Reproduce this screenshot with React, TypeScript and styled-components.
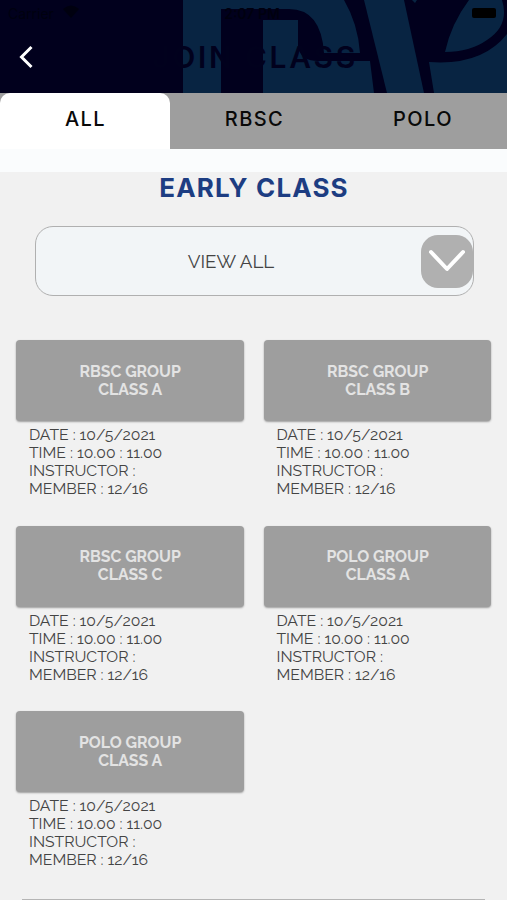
import React from "react";
import styled, { createGlobalStyle } from "styled-components";

const GlobalStyle = createGlobalStyle`
  * { box-sizing: border-box; }
  body { margin: 0; background: #f1f1f1; }
`;

const Screen = styled.main`
  width: 507px;
  height: 900px;
  overflow: hidden;
  background: #f1f1f1;
  font-family: Raleway, Lato, sans-serif;
  color: #444;
`;

const Header = styled.header`
  position: relative;
  height: 93px;
  background: #01001d;
  overflow: hidden;
`;

const Emblem = styled.svg`
  position: absolute;
  inset: 0;
`;

const StatusBar = styled.div`
  position: relative;
  display: flex;
  justify-content: space-between;
  height: 28px;
  padding: 5px 11px 0 8px;
  font: 14px/18px Inter, sans-serif;
  color: #00000f;
`;

const Carrier = styled.div`
  display: flex;
  gap: 8px;
  width: 120px;
`;

const Clock = styled.span`
  font-weight: 600;
`;

const BatterySlot = styled.div`
  display: flex;
  justify-content: flex-end;
  width: 120px;
  padding-top: 3px;
`;

const Battery = styled.span`
  width: 24px;
  height: 10px;
  border-radius: 2px;
  background: #000;
`;

const TitleBar = styled.div`
  position: relative;
  display: grid;
  grid-template-columns: 52px 1fr 52px;
  align-items: center;
  height: 58px;
`;

const BackButton = styled.button`
  display: flex;
  justify-content: center;
  padding: 0;
  border: 0;
  background: none;
`;

const Title = styled.h1`
  margin: 0;
  padding: 0 0 1px 3px;
  text-align: center;
  white-space: nowrap;
  font: 600 30px/34px Inter, sans-serif;
  letter-spacing: 2.7px;
  color: #01011d;
`;

const Tabs = styled.nav`
  display: grid;
  grid-template-columns: 170px 168px 169px;
  height: 56px;
  background: #9e9e9e;
`;

const Tab = styled.button<{ $active?: boolean }>`
  height: 56px;
  padding: 0 0 5px 1px;
  border: 0;
  border-radius: ${(p) => (p.$active ? "10px 10px 0 0" : "0")};
  background: ${(p) => (p.$active ? "#fff" : "transparent")};
  font: 500 20px/24px Inter, sans-serif;
  letter-spacing: 1.4px;
  color: #090909;
`;

const Strip = styled.div`
  height: 23px;
  background: #fafcfd;
`;

const Heading = styled.h2`
  margin: 0;
  padding: 0 0 1px 1px;
  text-align: center;
  font: 700 26px/31px Inter, sans-serif;
  letter-spacing: 1.15px;
  color: #1d3d82;
`;

const Select = styled.button`
  display: grid;
  grid-template-columns: 1fr 52px;
  align-items: center;
  width: 439px;
  height: 70px;
  margin: 22.4px 0 0 34.5px;
  padding: 0;
  border: 1px solid #b0b0b0;
  border-radius: 18px;
  background: #f2f5f7;
`;

const SelectLabel = styled.span`
  padding: 0 0 0 6px;
  font: 400 18.8px/24px Raleway, Lato, sans-serif;
  color: #444;
`;

const SelectArrow = styled.span`
  display: flex;
  align-items: center;
  justify-content: center;
  width: 52px;
  height: 53px;
  border-radius: 17px;
  background: #b0b0b0;
`;

const Grid = styled.section`
  display: grid;
  grid-template-columns: 227.5px 227.5px;
  column-gap: 20px;
  grid-auto-rows: 185.4px;
  height: 558.6px;
  margin: 44px 0 0 16.4px;
`;

const CardButton = styled.button`
  display: block;
  width: 227.5px;
  height: 81px;
  padding: 0;
  border: 0;
  border-radius: 4px;
  background: #9e9e9e;
  box-shadow: 0 1px 2px rgba(0, 0, 0, 0.35);
  font: 700 15.85px/18px Raleway, Lato, sans-serif;
  color: #e3e3e3;
`;

const CardTitleLine = styled.span`
  display: block;
`;

const Details = styled.div`
  padding: 5px 0 0 12.6px;
`;

const Detail = styled.div`
  font: 400 15.75px/18px Raleway, Lato, sans-serif;
  white-space: nowrap;
`;

const NextPanel = styled.div`
  height: 20px;
  margin: 0 22px;
  border-top: 1px solid #b5b5b5;
`;

const classes = [
  { group: "RBSC GROUP", name: "CLASS A" },
  { group: "RBSC GROUP", name: "CLASS B" },
  { group: "RBSC GROUP", name: "CLASS C" },
  { group: "POLO GROUP", name: "CLASS A" },
  { group: "POLO GROUP", name: "CLASS A" },
];

function ClassCard({ group, name }: { group: string; name: string }) {
  return (
    <article>
      <CardButton>
        <CardTitleLine>{group}</CardTitleLine>
        <CardTitleLine>{name}</CardTitleLine>
      </CardButton>
      <Details>
        <Detail>DATE : 10/5/2021</Detail>
        <Detail>TIME : 10.00 : 11.00</Detail>
        <Detail>INSTRUCTOR :</Detail>
        <Detail>MEMBER : 12/16</Detail>
      </Details>
    </article>
  );
}

export default function App() {
  return (
    <Screen>
      <GlobalStyle />
      <Header>
        <Emblem width="507" height="93" viewBox="0 0 507 93" fill="#082442">
          <path d="M183 0H344Q358 24 360 53H324Q321 9 289 9H221V93H183Z" />
          <path d="M263 20H298V48Q302 61 318 61H370L374 93H263Z" />
          <path d="M364 0H404L424 93H387Z" />
          <path d="M412 0H417L415 3Z" />
          <path d="M469 0H502Q510 25 487 40Q470 52 445 52Q451 24 469 0Z" />
          <path d="M429 62Q482 66 507 34V93H434Z" />
        </Emblem>
        <StatusBar>
          <Carrier>
            <span>Carrier</span>
            <svg width="18" height="14" viewBox="0 0 18 14" fill="currentColor">
              <path d="M1 4Q9-3 17 4L9 13Z" />
            </svg>
          </Carrier>
          <Clock>2:07 PM</Clock>
          <BatterySlot>
            <Battery />
          </BatterySlot>
        </StatusBar>
        <TitleBar>
          <BackButton aria-label="Back">
            <svg width="14" height="24" viewBox="0 0 14 24" fill="none" stroke="#fff" strokeWidth="3">
              <path d="M12.5 2L2.5 12L12.5 22" />
            </svg>
          </BackButton>
          <Title>JOIN CLASS</Title>
        </TitleBar>
      </Header>
      <Tabs>
        <Tab $active>ALL</Tab>
        <Tab>RBSC</Tab>
        <Tab>POLO</Tab>
      </Tabs>
      <Strip />
      <Heading>EARLY CLASS</Heading>
      <Select>
        <SelectLabel>VIEW ALL</SelectLabel>
        <SelectArrow>
          <svg width="38" height="24" viewBox="0 0 38 24" fill="none" stroke="#fff" strokeWidth="4" strokeLinecap="round" strokeLinejoin="round">
            <path d="M3 3L19 20L35 3" />
          </svg>
        </SelectArrow>
      </Select>
      <Grid>
        {classes.map((item, index) => (
          <ClassCard key={index} {...item} />
        ))}
      </Grid>
      <NextPanel />
    </Screen>
  );
}
